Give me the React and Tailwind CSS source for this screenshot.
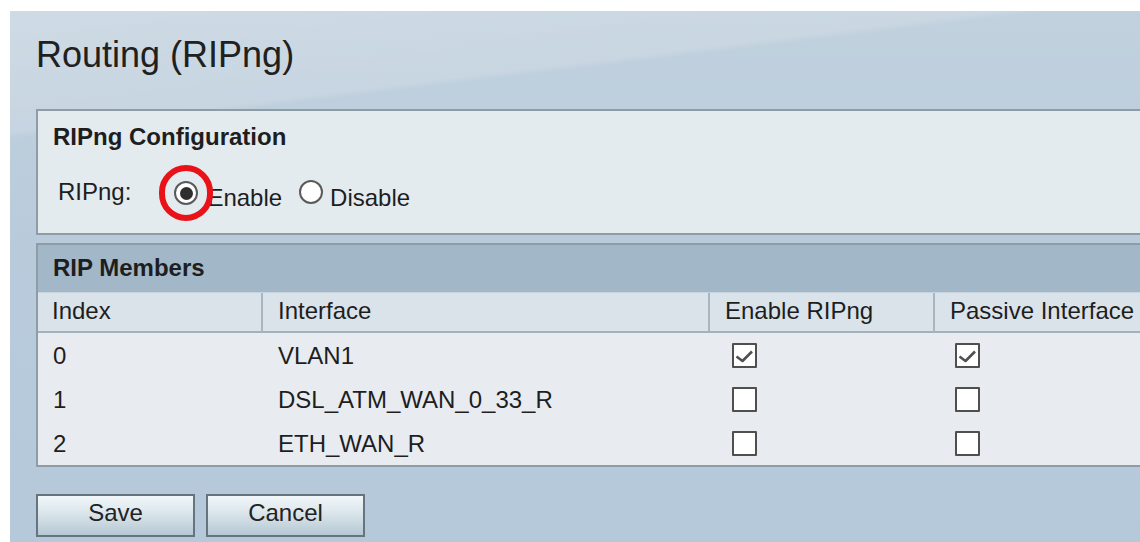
import React from "react";

const font = "font-['Liberation_Sans',Arial,sans-serif]";

function Check({ checked }) {
  return (
    <div className="w-[25px] h-[25px] border-2 border-[#4f4f4f] bg-white rounded-[1px] flex items-center justify-center">
      {checked && (
        <svg width="21" height="21" viewBox="0 0 21 21">
          <polyline points="2.5,11.5 8.5,16 18,6.5" fill="none" stroke="#505050" strokeWidth="2.6" strokeLinejoin="round" />
        </svg>
      )}
    </div>
  );
}

function Radio({ on }) {
  return (
    <div className="w-[24px] h-[24px] rounded-full border-2 border-[#5a5a5a] bg-white flex items-center justify-center">
      {on && <div className="w-[13px] h-[13px] rounded-full bg-[#2e2e2e]" />}
    </div>
  );
}

const rows = [
  { i: "0", name: "VLAN1", rip: true, passive: true },
  { i: "1", name: "DSL_ATM_WAN_0_33_R", rip: false, passive: false },
  { i: "2", name: "ETH_WAN_R", rip: false, passive: false },
];

export default function App() {
  return (
    <div className={`w-[1140px] h-[542px] overflow-hidden bg-white pt-[11px] pl-[10px] ${font} text-[#1e1e1e]`}>
      <div className="h-full w-[1160px] pl-[26px] pt-[26px] bg-[linear-gradient(173deg,rgba(255,255,255,0.22)_0%,rgba(255,255,255,0.14)_18%,rgba(255,255,255,0)_19%),linear-gradient(180deg,#c1d1de_0%,#b9cbdb_45%,#b5c9db_100%)]">
        <h1 className="text-[36px] leading-[36px] h-[36px] text-[#202020]">Routing (RIPng)</h1>

        {/* configuration box */}
        <section className="mt-[36px] w-[1130px] h-[126px] border-2 border-[#8e9ca6] bg-[#e4ebef] pl-[15px] pt-[14px]">
          <h2 className="text-[24px] leading-[24px] font-bold">RIPng Configuration</h2>
          <div className="mt-[31px] flex items-start text-[24px] leading-[24px]">
            <span className="ml-[5px]">RIPng:</span>
            <div className="relative ml-[43px] mt-[1px]">
              <Radio on />
              <div className="absolute left-1/2 top-1/2 w-[54px] h-[56px] -translate-x-1/2 -translate-y-1/2 rounded-full border-[6px] border-[#ea1219] z-10" />
            </div>
            <span className="ml-[9px] mt-[6px]">Enable</span>
            <div className="ml-[17px] mt-[0px]">
              <Radio />
            </div>
            <span className="ml-[7px] mt-[6px]">Disable</span>
          </div>
        </section>

        {/* members table */}
        <section className="mt-[8px] w-[1130px] border-2 border-[#8e9ca6] bg-[#e8ecf1]">
          <div className="h-[48px] bg-[#a2b7c8] flex items-center pl-[15px] pb-[2px] border-b border-[#c9d5de]">
            <h2 className="text-[24px] leading-[24px] font-bold">RIP Members</h2>
          </div>
          <div className="grid grid-cols-[225px_447px_225px_1fr] h-[40px] bg-[#dae3ea] border-b-2 border-[#a4b1bb] text-[24px] leading-[24px]">
            <div className="flex items-center pl-[14px] pb-[3px] border-r-2 border-[#a9b6c0]">Index</div>
            <div className="flex items-center pl-[15px] pb-[3px] border-r-2 border-[#a9b6c0]">Interface</div>
            <div className="flex items-center pl-[15px] pb-[3px] border-r-2 border-[#a9b6c0]">Enable RIPng</div>
            <div className="flex items-center pl-[15px] pb-[3px]">Passive Interface</div>
          </div>
          {rows.map((r) => (
            <div key={r.i} className="grid grid-cols-[225px_447px_225px_1fr] h-[44px] text-[24px] leading-[24px]">
              <div className="flex items-center pl-[15px] pt-[2px]">{r.i}</div>
              <div className="flex items-center pl-[15px] pt-[2px]">{r.name}</div>
              <div className="flex items-center pl-[22px]">
                <Check checked={r.rip} />
              </div>
              <div className="flex items-center pl-[20px]">
                <Check checked={r.passive} />
              </div>
            </div>
          ))}
        </section>

        <div className="mt-[27px] flex gap-[11px]">
          {["Save", "Cancel"].map((b) => (
            <button
              key={b}
              className="w-[159px] h-[43px] border-2 border-[#65747d] bg-[linear-gradient(180deg,#f2f7fa_0%,#dce7ed_40%,#b6c8d3_100%)] text-[24px] leading-[24px] text-[#222] pb-[6px]"
            >
              {b}
            </button>
          ))}
        </div>
      </div>
    </div>
  );
}
